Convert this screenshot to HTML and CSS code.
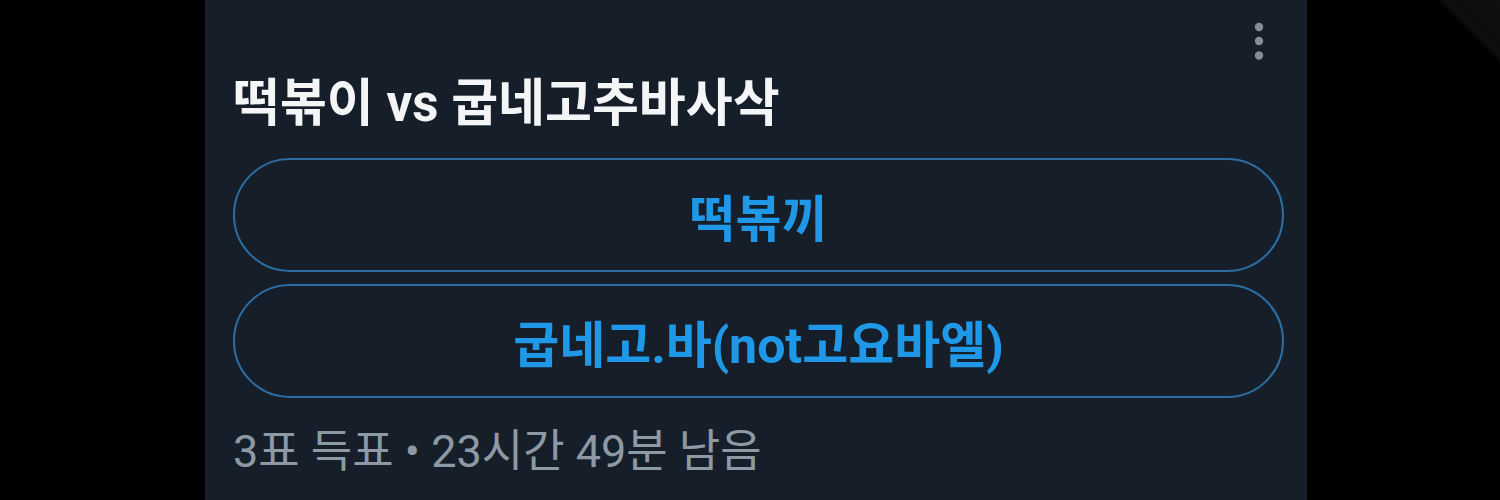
FILE: index.html
```html
<!DOCTYPE html>
<html lang="ko">
<head>
<meta charset="utf-8">
<link rel="stylesheet" href="styles.css">
</head>
<body>
<div class="page">
  <div class="panel">
    <div class="top">
      <svg class="more" width="10" height="40" viewBox="0 0 10 40" aria-hidden="true">
        <circle cx="5" cy="5" r="4.2" fill="#858e98"/>
        <circle cx="5" cy="19" r="4.2" fill="#858e98"/>
        <circle cx="5" cy="33.5" r="4.2" fill="#858e98"/>
      </svg>
    </div>
    <div class="title">떡볶이 vs 굽네고추바사삭</div>
    <div class="options">
      <div class="option">떡볶끼</div>
      <div class="option">굽네고.바(not고요바엘)</div>
    </div>
    <div class="meta">3표 득표 • 23시간 49분 남음</div>
  </div>
</div>
</body>
</html>
```

FILE: styles.css
```css
html, body {
  margin: 0;
  padding: 0;
}
body {
  width: 1500px;
  height: 500px;
  overflow: hidden;
  background: linear-gradient(225deg, #101010 0, #0d0d0d 40px, #000 46px, #000 100%);
  font-family: Roboto, "Noto Sans CJK KR", sans-serif;
}
.page {
  display: flex;
  height: 500px;
  padding-left: 205px;
}
.panel {
  width: 1102px;
  height: 500px;
  box-sizing: border-box;
  background: #161f29;
  padding: 22px 23px 0 28px;
  display: flex;
  flex-direction: column;
}
.top {
  display: flex;
  justify-content: flex-end;
  height: 40px;
  padding-right: 20px;
}
.more {
  display: block;
}
.title {
  color: #f3f5f7;
  font-weight: 700;
  font-size: 51px;
  line-height: 60px;
  margin-top: 12px;
}
.options {
  display: flex;
  flex-direction: column;
  gap: 12px;
  margin-top: 24px;
}
.option {
  height: 114px;
  box-sizing: border-box;
  border: 2px solid #2c6ea3;
  border-radius: 57px;
  display: flex;
  align-items: center;
  justify-content: center;
  color: #1f98e8;
  font-weight: 700;
  font-size: 50px;
}
.meta {
  margin-top: 26px;
  color: #8d99a5;
  font-size: 45px;
  line-height: 56px;
}
```
